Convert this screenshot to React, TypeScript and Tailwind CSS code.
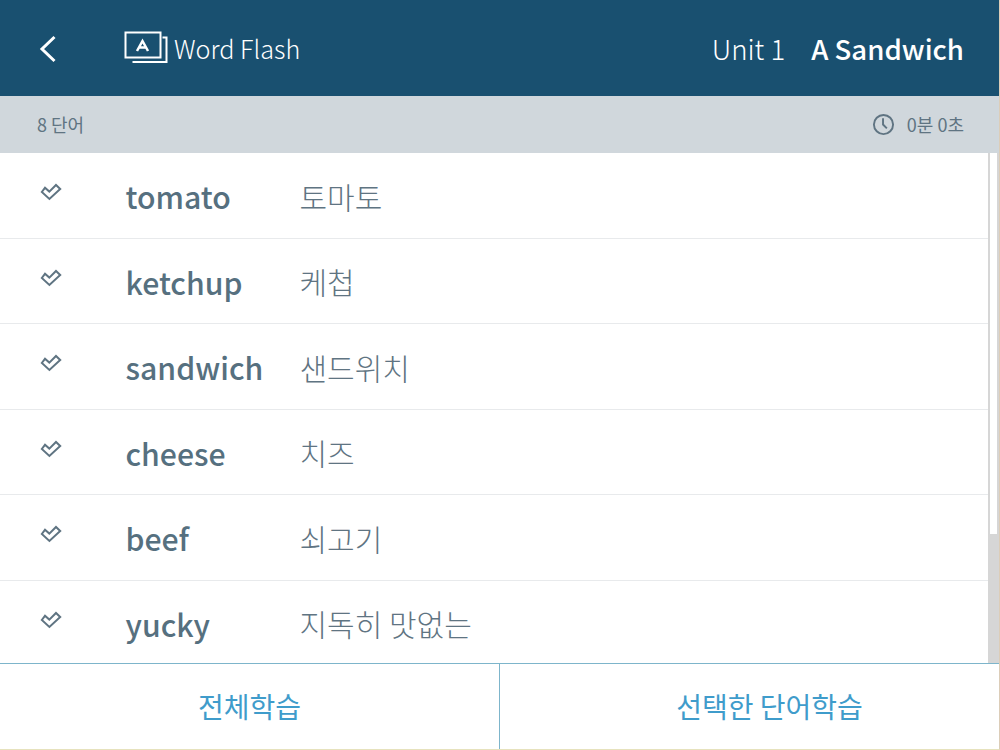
import React from "react";

const words = [
  { en: "tomato", ko: "토마토" },
  { en: "ketchup", ko: "케첩" },
  { en: "sandwich", ko: "샌드위치" },
  { en: "cheese", ko: "치즈" },
  { en: "beef", ko: "쇠고기" },
  { en: "yucky", ko: "지독히 맛없는" },
];

const CheckIcon = () => (
  <svg width="22" height="18" viewBox="0 0 22 18" fill="none" stroke="#5f7482" strokeWidth="2" className="block">
    <path d="M1.8 9 L5 4.8 L9.3 8.6 L16 2 L20.2 6 L9.4 16 Z" strokeLinejoin="miter" />
  </svg>
);

const LogoIcon = () => (
  <svg width="44" height="34" viewBox="0 0 44 34" fill="none" stroke="#fff" className="block">
    <rect x="1.5" y="1.5" width="35" height="25" strokeWidth="2" />
    <path d="M8.5 31 H42.5 V6.5 H38.5" strokeWidth="2" />
    <path d="M13 20 L18.5 10 L24 20 M15.5 16.5 H21.5" strokeWidth="2.5" />
  </svg>
);

const ClockIcon = () => (
  <svg width="23" height="23" viewBox="0 0 24 24" fill="none" stroke="#5f7482" strokeWidth="2" className="block">
    <circle cx="12" cy="12" r="10" />
    <path d="M11.5 5.5 V12 L15.5 16" />
  </svg>
);

export default function App() {
  return (
    <div
      className="w-[1000px] h-[750px] flex flex-col overflow-hidden bg-white border-r border-b border-r-[#dccdb8] border-b-[#e6e2bd]"
      style={{ fontFamily: '"Noto Sans CJK KR", "Noto Sans", sans-serif' }}
    >
      {/* Header */}
      <header className="h-[96px] shrink-0 flex items-center bg-[#195070] text-white">
        <div className="w-[124px] pl-[39px] shrink-0">
          <svg width="18" height="28" viewBox="0 0 18 28" fill="none" stroke="#fff" strokeWidth="3" className="block mt-[2px]">
            <path d="M15.5 2 L3 14 L15.5 26" />
          </svg>
        </div>
        <LogoIcon />
        <span className="ml-[6px] pt-[2px] text-[25.2px] font-light leading-none">Word Flash</span>
        <div className="ml-auto pr-[35px] pt-[2px] flex items-center text-[27.6px] leading-none">
          <span className="font-light">Unit 1</span>
          <span className="ml-[26px] font-medium">A Sandwich</span>
        </div>
      </header>

      {/* Info bar */}
      <div className="h-[57px] shrink-0 flex items-center justify-between pl-[37px] pr-[35px] bg-[#d0d7dc] text-[#5f7482] text-[18px] font-normal">
        <span>8 단어</span>
        <div className="flex items-center">
          <ClockIcon />
          <span className="ml-[12px]">0분 0초</span>
        </div>
      </div>

      {/* Word list */}
      <div className="flex-1 min-h-0 flex overflow-hidden">
        <div className="flex-1 min-w-0 overflow-hidden">
          {words.map((word) => (
            <div key={word.en} className="h-[85.5px] flex items-center border-b border-[#e8eaec]">
              <div className="w-[125.5px] pl-[39.5px] shrink-0 -mt-[6px]">
                <CheckIcon />
              </div>
              <span className="w-[174px] shrink-0 pt-[2px] text-[30.2px] font-medium text-[#56707f] leading-none">{word.en}</span>
              <span className="pt-[1px] text-[30px] font-light text-[#5f7482] leading-none">{word.ko}</span>
            </div>
          ))}
        </div>
        <div className="w-[11px] shrink-0 bg-[#d6d6d6] pl-[2px] pr-[2px]">
          <div className="h-[381px] bg-white" />
        </div>
      </div>

      {/* Footer buttons */}
      <div className="h-px shrink-0 bg-[#7db5cb]" />
      <div className="h-[85px] shrink-0 flex text-[#3f9ccb] text-[28px] font-normal">
        <button className="w-[499px] flex items-center justify-center pb-[2px]">전체학습</button>
        <div className="w-px shrink-0 bg-[#7db5cb]" />
        <button className="flex-1 flex items-center justify-center pl-[40px] pb-[2px]">선택한 단어학습</button>
      </div>
    </div>
  );
}
